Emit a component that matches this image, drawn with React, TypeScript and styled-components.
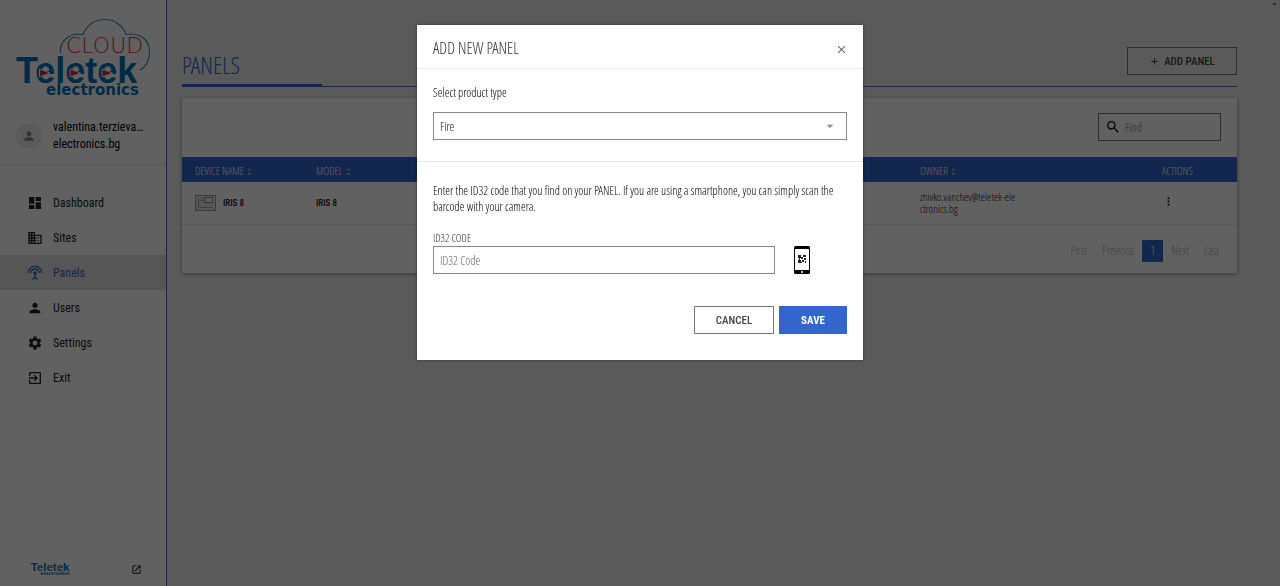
import React from "react";
import styled, { createGlobalStyle } from "styled-components";
import {
  MdDashboard,
  MdBusiness,
  MdPerson,
  MdSettings,
  MdExitToApp,
  MdOpenInNew,
  MdSearch,
  MdMoreVert,
  MdArrowDropDown,
  MdUnfoldMore,
  MdAdd,
  MdClose,
} from "react-icons/md";

const blue = "#3366cc";
const light = `"Open Sans Condensed Light", "Roboto Condensed", "Liberation Sans", sans-serif`;
const medium = `"Roboto Condensed", "Liberation Sans", sans-serif`;

const GlobalStyle = createGlobalStyle`
  * { box-sizing: border-box; }
  body {
    margin: 0;
    background: #ededed;
    color: #111;
    font-family: ${light};
    font-size: 12px;
  }
  button, input, select { font: inherit; color: inherit; }
`;

const Shell = styled.div`
  display: flex;
  min-height: 100vh;
`;

const Sidebar = styled.aside`
  display: flex;
  flex-direction: column;
  flex: 0 0 167px;
  min-width: 0;
  background: #fff;
  border-right: 1px solid ${blue};
`;

const Brand = styled.div`
  height: 115px;
  padding: 16px 0 0 14px;
`;

const Account = styled.div`
  display: flex;
  align-items: center;
  gap: 11px;
  height: 50px;
  padding: 0 16px 8px;
  border-bottom: 1px solid #eaeaea;
`;

const Avatar = styled.span`
  display: grid;
  place-items: center;
  flex: none;
  width: 26px;
  height: 26px;
  border-radius: 50%;
  background: #eee;
  color: #8a8a8a;
`;

const Email = styled.div`
  color: #000;
  font-family: ${medium};
  line-height: 17px;
  white-space: nowrap;
`;

const Nav = styled.nav`
  display: flex;
  flex-direction: column;
  flex: 1;
  padding-top: 20px;
`;

const NavLink = styled.a<{ $active?: boolean }>`
  display: flex;
  align-items: center;
  gap: 10px;
  height: 35px;
  padding-left: 27px;
  font-family: ${medium};
  text-decoration: none;
  color: ${(p) => (p.$active ? blue : "#222")};
  background: ${(p) => (p.$active ? "#e2e2e2" : "transparent")};
`;

const SidebarFoot = styled.div`
  display: flex;
  align-items: center;
  justify-content: space-between;
  padding: 0 24px 8px 30px;
`;

const Main = styled.main`
  flex: 1;
  min-width: 0;
  padding: 47px 43px 0 15px;
`;

const PageHead = styled.header`
  display: flex;
  justify-content: space-between;
  align-items: flex-start;
  height: 40px;
  border-bottom: 1px solid ${blue};
`;

const PageTitle = styled.h1`
  width: 140px;
  height: 40px;
  margin: 0;
  border-bottom: 3px solid ${blue};
  color: ${blue};
  font-size: 24px;
  font-weight: 400;
  line-height: 36px;
`;

const Button = styled.button<{ $primary?: boolean; $width: number }>`
  display: flex;
  align-items: center;
  justify-content: center;
  gap: 4px;
  width: ${(p) => p.$width}px;
  height: 28px;
  padding: 0;
  border: 1px solid ${(p) => (p.$primary ? blue : "#777")};
  background: ${(p) => (p.$primary ? blue : "transparent")};
  color: ${(p) => (p.$primary ? "#fff" : "#444")};
  font-family: ${medium};
  font-size: 11px;
  font-weight: ${(p) => (p.$primary ? 700 : 500)};
`;

const Card = styled.section`
  margin-top: 11px;
  background: #fff;
  box-shadow: 0 1px 4px rgba(0, 0, 0, 0.4);
`;

const Toolbar = styled.div`
  display: flex;
  justify-content: flex-end;
  padding: 15px 16px 16px;
`;

const SearchBox = styled.label`
  display: flex;
  align-items: center;
  gap: 4px;
  width: 123px;
  height: 28px;
  padding: 0 6px;
  border: 1px solid #777;
  color: #111;
  input {
    width: 80px;
    padding: 0;
    border: 0;
    background: none;
  }
  input::placeholder { color: #777; }
`;

const Table = styled.table`
  width: 100%;
  table-layout: fixed;
  border-collapse: collapse;
`;

const Th = styled.th`
  height: 25px;
  padding: 2px 0 0 13px;
  background: ${blue};
  color: #fff;
  font-size: 11px;
  font-weight: 400;
  text-align: left;
  svg { margin-left: -1px; vertical-align: -1px; opacity: 0.7; }
`;

const Td = styled.td<{ $strong?: boolean }>`
  height: 42px;
  padding: 0 0 0 13px;
  border-bottom: 1px solid #e6e6e6;
  font-family: ${(p) => (p.$strong ? medium : light)};
  font-weight: ${(p) => (p.$strong ? 500 : 400)};
  font-size: ${(p) => (p.$strong ? 9 : 11)}px;
  line-height: 12px;
`;

const Device = styled.div`
  display: flex;
  align-items: center;
  gap: 7px;
`;

const MenuButton = styled.button`
  display: block;
  padding: 0;
  border: 0;
  background: none;
  color: #222;
`;

const Pager = styled.nav`
  display: flex;
  justify-content: flex-end;
  align-items: center;
  gap: 1px;
  height: 48px;
  padding: 4px 11px 0 0;
`;

const PageButton = styled.button<{ $current?: boolean }>`
  min-width: 21px;
  height: 22px;
  padding: 0 7px;
  border: 0;
  background: ${(p) => (p.$current ? blue : "transparent")};
  color: ${(p) => (p.$current ? "#fff" : "#aaa")};
`;

const Overlay = styled.div`
  position: fixed;
  inset: 0;
  display: flex;
  justify-content: center;
  align-items: flex-start;
  padding-top: 25px;
  background: rgba(0, 0, 0, 0.62);
`;

const Dialog = styled.div`
  width: 446px;
  background: #fff;
  box-shadow: 0 0 3px rgba(0, 0, 0, 0.5);
`;

const DialogHead = styled.div`
  display: flex;
  align-items: center;
  justify-content: space-between;
  height: 44px;
  padding: 3px 15px 0 16px;
  border-bottom: 1px solid #e6e6e6;
`;

const DialogTitle = styled.h2`
  margin: 0;
  color: #333;
  font-size: 16px;
  font-weight: 400;
`;

const CloseButton = styled.button`
  display: flex;
  padding: 2px 0 0;
  border: 0;
  background: none;
  color: #666;
`;

const Section = styled.div<{ $ruled?: boolean }>`
  padding: ${(p) => (p.$ruled ? "16px 16px 21px" : "21px 16px 26px")};
  border-bottom: ${(p) => (p.$ruled ? "1px solid #e6e6e6" : "0")};
`;

const FieldLabel = styled.label<{ $small?: boolean }>`
  display: block;
  margin-bottom: ${(p) => (p.$small ? 0 : 11)}px;
  color: ${(p) => (p.$small ? "#333" : "#000")};
  font-size: ${(p) => (p.$small ? 11 : 12)}px;
  line-height: 16px;
`;

const SelectWrap = styled.div`
  position: relative;
  svg {
    position: absolute;
    right: 9px;
    top: 6px;
    color: #888;
    pointer-events: none;
  }
`;

const Select = styled.select`
  display: block;
  width: 100%;
  height: 28px;
  padding: 0 6px;
  appearance: none;
  border: 1px solid #888;
  border-radius: 0;
  background: #fff;
`;

const Help = styled.p`
  margin: 0 0 15px;
  color: #000;
  line-height: 16px;
`;

const CodeRow = styled.div`
  display: flex;
  align-items: center;
  gap: 19px;
`;

const CodeInput = styled.input`
  width: 342px;
  height: 28px;
  padding: 0 6px;
  border: 1px solid #888;
  &::placeholder { color: #666; }
`;

const Actions = styled.div`
  display: flex;
  justify-content: flex-end;
  gap: 5px;
  margin-top: 32px;
`;

const ScrollMark = styled.svg`
  position: fixed;
  top: 1px;
  right: 3px;
`;

function Wordmark() {
  return (
    <g fill="#0072bc">
      <text x="2" y="67" fontFamily="Liberation Sans" fontSize="36" fontWeight="700">Teletek</text>
      <g fill="#e02030" stroke="#fff" strokeWidth="1">
        <path d="M25.500 53l10.500 4-10.500 4z" />
        <path d="M56 53l10.500 4-10.500 4z" />
        <path d="M88 53l10.500 4-10.500 4z" />
      </g>
      <text x="32" y="79" fontFamily="DejaVu Sans" fontSize="15" fontWeight="700">electronics</text>
    </g>
  );
}

function CloudLogo() {
  return (
    <svg width="140" height="84" viewBox="0 0 140 84" role="img" aria-label="Teletek electronics cloud">
      <path d="M46.500 37C45 26 55 16 69 18.500C74 7 82 3.500 91 3.500C101 3.500 109 10 112 18.500C126 16 136 24 135.500 37C135.500 45 131 52 126 54" fill="none" stroke="#3a8cc8" strokeWidth="1.200" />
      <text x="52" y="37" fontFamily="DejaVu Sans" fontWeight="200" fontSize="22" fill="#e0303c">CLOUD</text>
      <Wordmark />
    </svg>
  );
}

function FootLogo() {
  return (
    <svg width="41" height="17" viewBox="0 38 128 50" role="img" aria-label="Teletek electronics">
      <Wordmark />
    </svg>
  );
}

function AntennaIcon() {
  return (
    <svg width="16" height="16" viewBox="0 0 24 24" fill="currentColor" aria-hidden="true">
      <path d="M12 5c-3.870 0-7 3.130-7 7h2c0-2.760 2.240-5 5-5s5 2.240 5 5h2c0-3.870-3.130-7-7-7zm1 9.290c.88-.39 1.500-1.260 1.500-2.290 0-1.380-1.120-2.500-2.500-2.500S9.500 10.620 9.500 12c0 1.020.62 1.900 1.500 2.290v3.300L7.590 21 9 22.410l3-3 3 3L16.410 21 13 17.590v-3.300zM12 1C5.930 1 1 5.930 1 12h2c0-4.970 4.030-9 9-9s9 4.030 9 9h2c0-6.070-4.930-11-11-11z" />
    </svg>
  );
}

function DevicePicture() {
  return (
    <svg width="21" height="16" viewBox="0 0 21 16" fill="none" stroke="#aaa" aria-hidden="true">
      <rect x=".5" y=".5" width="20" height="15" fill="#e4e4e4" stroke="#999" />
      <path d="M3.500 3v9.500h14" />
      <path d="M5 3.500h4M5 5.500h4" stroke="#bbb" />
      <rect x="9.500" y="2.500" width="8" height="5" fill="#eee" stroke="#888" />
    </svg>
  );
}

function ScanPhone() {
  return (
    <svg width="16" height="28" viewBox="0 0 16 28" aria-hidden="true">
      <rect width="16" height="28" rx="1.500" fill="#000" />
      <rect x="1" y="3" width="14" height="21" fill="#fff" />
      <path d="M4 9h3v3H4zM9 9h3v2H9zM4 14h3v3H4zM7 11h2v2H7zM10 12h2v2h-2zM8 14h2v2H8zM11 15h1v2h-1zM7 16h1v1H7zM5 12h1v2H5z" fill="#222" />
      <circle cx="8" cy="26" r="1" fill="#fff" />
    </svg>
  );
}

const links = [
  { label: "Dashboard", icon: <MdDashboard size={16} /> },
  { label: "Sites", icon: <MdBusiness size={16} /> },
  { label: "Panels", icon: <AntennaIcon />, active: true },
  { label: "Users", icon: <MdPerson size={16} /> },
  { label: "Settings", icon: <MdSettings size={16} /> },
  { label: "Exit", icon: <MdExitToApp size={16} /> },
];

export default function App() {
  return (
    <>
      <GlobalStyle />
      <Shell>
        <Sidebar>
          <Brand><CloudLogo /></Brand>
          <Account>
            <Avatar><MdPerson size={14} /></Avatar>
            <Email>valentina.terzieva…<br />electronics.bg</Email>
          </Account>
          <Nav>
            {links.map((l) => (
              <NavLink key={l.label} href="#" $active={l.active}>{l.icon}{l.label}</NavLink>
            ))}
          </Nav>
          <SidebarFoot><FootLogo /><MdOpenInNew size={11} /></SidebarFoot>
        </Sidebar>
        <Main>
          <PageHead>
            <PageTitle>PANELS</PageTitle>
            <Button $width={110}><MdAdd size={11} />ADD PANEL</Button>
          </PageHead>
          <Card>
            <Toolbar>
              <SearchBox><MdSearch size={16} /><input type="search" placeholder="Find" aria-label="Find" /></SearchBox>
            </Toolbar>
            <Table>
              <colgroup><col width="121" /><col /><col width="242" /><col width="88" /></colgroup>
              <thead>
                <tr>
                  <Th>DEVICE NAME <MdUnfoldMore size={9} /></Th>
                  <Th>MODEL <MdUnfoldMore size={9} /></Th>
                  <Th>OWNER <MdUnfoldMore size={9} /></Th>
                  <Th>ACTIONS</Th>
                </tr>
              </thead>
              <tbody>
                <tr>
                  <Td $strong><Device><DevicePicture />IRIS 8</Device></Td>
                  <Td $strong>IRIS 8</Td>
                  <Td>zhivko.vanchev@teletek-ele<br />ctronics.bg</Td>
                  <Td><MenuButton aria-label="Row actions"><MdMoreVert size={13} /></MenuButton></Td>
                </tr>
              </tbody>
            </Table>
            <Pager>
              <PageButton>First</PageButton>
              <PageButton>Previous</PageButton>
              <PageButton $current>1</PageButton>
              <PageButton>Next</PageButton>
              <PageButton>Last</PageButton>
            </Pager>
          </Card>
        </Main>
        <ScrollMark width="5" height="5" viewBox="0 0 5 5" aria-hidden="true">
          <path d="M2.500 1L5 4H0z" fill="#888" />
        </ScrollMark>
      </Shell>
      <Overlay>
        <Dialog role="dialog" aria-modal="true" aria-labelledby="dialog-title">
          <DialogHead>
            <DialogTitle id="dialog-title">ADD NEW PANEL</DialogTitle>
            <CloseButton aria-label="Close"><MdClose size={13} /></CloseButton>
          </DialogHead>
          <Section $ruled>
            <FieldLabel htmlFor="product">Select product type</FieldLabel>
            <SelectWrap>
              <Select id="product" defaultValue="Fire"><option>Fire</option></Select>
              <MdArrowDropDown size={16} />
            </SelectWrap>
          </Section>
          <Section>
            <Help>Enter the ID32 code that you find on your PANEL. If you are using a smartphone, you can simply scan the barcode with your camera.</Help>
            <FieldLabel $small htmlFor="code">ID32 CODE</FieldLabel>
            <CodeRow>
              <CodeInput id="code" placeholder="ID32 Code" />
              <ScanPhone />
            </CodeRow>
            <Actions>
              <Button $width={80}>CANCEL</Button>
              <Button $primary $width={68}>SAVE</Button>
            </Actions>
          </Section>
        </Dialog>
      </Overlay>
    </>
  );
}
